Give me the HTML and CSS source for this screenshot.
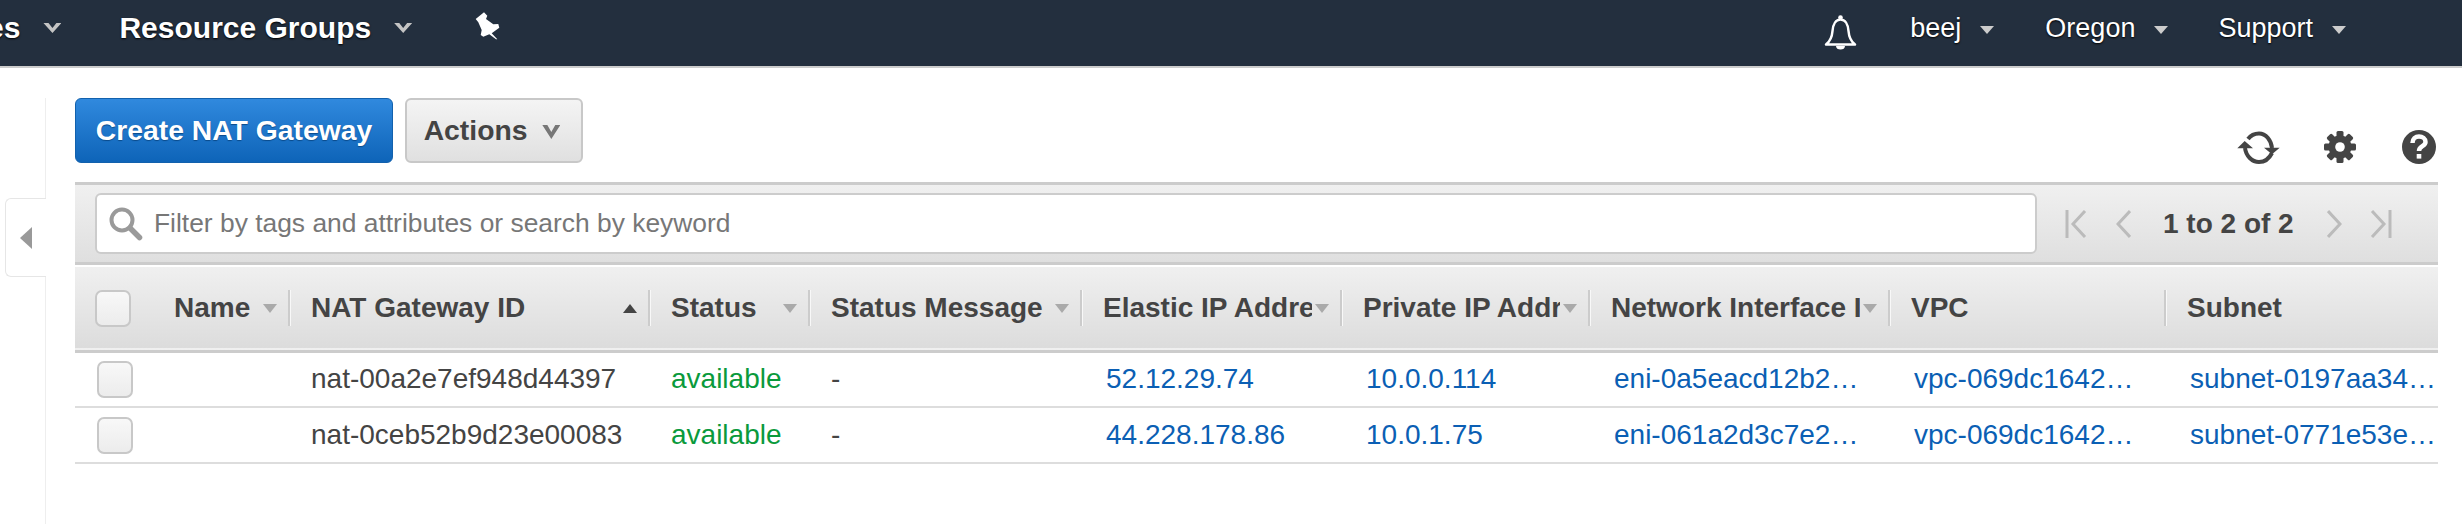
FILE: index.html
```html
<!DOCTYPE html>
<html lang="en">
<head>
    <meta charset="UTF-8">
    <title>NAT Gateways</title>
    <link rel="stylesheet" href="styles.css">
</head>
<body>
    <div class="nav">
        <div class="nav-item nav-services">Services <span class="chev"></span></div>
        <div class="nav-item nav-groups">Resource Groups <span class="chev"></span></div>
        <svg class="pin" width="26" height="30" viewBox="0 0 26 30"><path fill="#fff" d="M.7 8L9 1.300l3.300 3.400L11 8l7.300 5.300 5-.3 1 3.700-7.600 5.600 5.600 6h-1.300l-6.700-5-6 2.400-2.600-1.700 1-5-3.400-7.700z"/></svg>
        <div class="nav-right">
            <svg class="bell" width="33" height="35" viewBox="0 0 33 35"><path fill="none" stroke="#fff" stroke-width="2.500" stroke-linejoin="round" d="M2 29.500c4-3 6-7 6.500-13.500C9 9 12 4.500 16.500 4.500S24 9 24.500 16c.5 6.500 2.500 10.500 6.500 13.500z"/><circle cx="16.500" cy="2.500" r="2.300" fill="#fff"/><path fill="#fff" d="M12 31h9c0 2.500-2 3.500-4.500 3.500S12 33.500 12 31z"/></svg>
            <div class="nav-link link-user">beej <span class="caret"></span></div>
            <div class="nav-link link-region">Oregon <span class="caret"></span></div>
            <div class="nav-link link-support">Support <span class="caret"></span></div>
        </div>
    </div>

    <div class="page">
        <div class="side">
            <div class="side-tab"><span class="side-arrow"></span></div>
        </div>
        <div class="content">
            <div class="actions">
                <button class="btn btn-primary">Create NAT Gateway</button>
                <button class="btn btn-plain">Actions <span class="chev chev-dark"></span></button>
                <div class="tools">
                    <svg class="tool-refresh" width="44" height="34" viewBox="0 0 44 34"><g fill="none" stroke="#444" stroke-width="4"><path d="M11 8c3-4 7-5.500 11-5.500 7 0 12 6.500 13 14.500"/><path d="M35 22c-3 6-8 9-13 9-7 0-13-6-14-14"/></g><path fill="#444" d="M.3 17.300L7.700 10l8.300 7.300zM27 16.700h15.700L35 23.300z"/></svg>
                    <svg class="tool-gear" width="32" height="32" viewBox="0 0 32 32"><g fill="#444"><rect x="12.500" width="7" height="32" rx="1.500"/><rect y="12.500" width="32" height="7" rx="1.500"/><rect x="12.500" width="7" height="32" rx="1.500" transform="rotate(45 16 16)"/><rect x="12.500" width="7" height="32" rx="1.500" transform="rotate(135 16 16)"/><circle cx="16" cy="16" r="11.500"/></g><circle cx="16" cy="16" r="4.800" fill="#fff"/></svg>
                    <svg class="tool-help" width="34" height="34" viewBox="0 0 34 34"><circle cx="17" cy="17" r="17" fill="#444"/><path fill="none" stroke="#fff" stroke-width="4.500" d="M10.500 13c0-4 3-6.500 6.500-6.500s6.500 2.200 6.500 5.500c0 4.500-6.500 4-6.500 9"/><rect x="14.700" y="24" width="4.600" height="4.600" fill="#fff"/></svg>
                </div>
            </div>

            <div class="toolbar">
                <div class="filter">
                    <svg class="search" width="36" height="36" viewBox="0 0 36 36"><circle cx="14" cy="14" r="10.500" fill="none" stroke="#9a9a9a" stroke-width="4"/><path stroke="#9a9a9a" stroke-width="5.500" stroke-linecap="round" d="M22 22l9.500 9.500"/></svg>
                    <span>Filter by tags and attributes or search by keyword</span>
                </div>
                <div class="pager">
                    <svg width="22" height="28" viewBox="0 0 22 28"><path fill="none" stroke="#bbb" stroke-width="3" d="M2 0v28M20 1L8 14l12 13"/></svg>
                    <svg class="pager-prev" width="15" height="28" viewBox="0 0 15 28"><path fill="none" stroke="#bbb" stroke-width="3" d="M14 1L2 14l12 13"/></svg>
                    <span class="pager-text">1 to 2 of 2</span>
                    <svg class="pager-next" width="15" height="28" viewBox="0 0 15 28"><path fill="none" stroke="#bbb" stroke-width="3" d="M1 1l12 13L1 27"/></svg>
                    <svg class="pager-last" width="22" height="28" viewBox="0 0 22 28"><path fill="none" stroke="#bbb" stroke-width="3" d="M20 0v28M2 1l12 13L2 27"/></svg>
                </div>
            </div>

            <table class="grid">
                <colgroup>
                    <col class="c-check"><col class="c-name"><col class="c-id"><col class="c-status"><col class="c-msg">
                    <col class="c-eip"><col class="c-pip"><col class="c-eni"><col class="c-vpc"><col class="c-subnet">
                </colgroup>
                <thead>
                    <tr>
                        <th><div class="check check-head"></div></th>
                        <th><div class="th"><span class="th-label">Name</span><span class="sort"></span></div></th>
                        <th><div class="th"><span class="th-label">NAT Gateway ID</span><span class="sort sort-up"></span></div></th>
                        <th><div class="th"><span class="th-label">Status</span><span class="sort"></span></div></th>
                        <th><div class="th"><span class="th-label">Status Message</span><span class="sort"></span></div></th>
                        <th><div class="th"><span class="th-label">Elastic IP Address</span><span class="sort"></span></div></th>
                        <th><div class="th"><span class="th-label">Private IP Address</span><span class="sort"></span></div></th>
                        <th><div class="th"><span class="th-label">Network Interface ID</span><span class="sort"></span></div></th>
                        <th><div class="th"><span class="th-label">VPC</span></div></th>
                        <th class="th-last"><div class="th"><span class="th-label">Subnet</span></div></th>
                    </tr>
                </thead>
                <tbody>
                    <tr>
                        <td><div class="check"></div></td>
                        <td></td>
                        <td>nat-00a2e7ef948d44397</td>
                        <td class="ok">available</td>
                        <td>-</td>
                        <td><a>52.12.29.74</a></td>
                        <td><a>10.0.0.114</a></td>
                        <td><a>eni-0a5eacd12b2…</a></td>
                        <td><a>vpc-069dc1642…</a></td>
                        <td><a>subnet-0197aa34…</a></td>
                    </tr>
                    <tr>
                        <td><div class="check"></div></td>
                        <td></td>
                        <td>nat-0ceb52b9d23e00083</td>
                        <td class="ok">available</td>
                        <td>-</td>
                        <td><a>44.228.178.86</a></td>
                        <td><a>10.0.1.75</a></td>
                        <td><a>eni-061a2d3c7e2…</a></td>
                        <td><a>vpc-069dc1642…</a></td>
                        <td><a>subnet-0771e53e…</a></td>
                    </tr>
                </tbody>
            </table>
        </div>
    </div>
</body>
</html>
```

FILE: styles.css
```css
body {
    margin: 0;
    height: 524px;
    overflow: hidden;
    background-color: #ffffff;
    font-family: "Liberation Sans", Arial, sans-serif;
    color: #444444;
}
.nav {
    display: flex;
    align-items: center;
    height: 66px;
    border-bottom: 2px solid #cccccc;
    background-color: #232f3e;
    color: #ffffff;
    overflow: hidden;
    text-shadow: 0 1px 2px #000000;
}
.nav-item {
    display: flex;
    align-items: center;
    flex-shrink: 0;
    font-size: 30px;
    font-weight: bold;
    white-space: nowrap;
    padding-bottom: 10px;
}
.nav-services {
    margin-left: -103px;
}
.nav-groups {
    margin-left: 58px;
}
.chev {
    display: inline-block;
    width: 18px;
    height: 10px;
    margin-left: 23px;
    background-color: #c4c4c4;
    clip-path: polygon(0 0, 28% 0, 50% 50%, 72% 0, 100% 0, 50% 100%);
}
.chev-dark {
    height: 14px;
    margin-left: 7px;
    background-color: #777777;
    position: relative;
    top: -1px;
}
.pin {
    margin-left: 63px;
    margin-bottom: 14px;
}
.nav-right {
    display: flex;
    align-items: center;
    margin-left: auto;
    margin-right: 116px;
    padding-bottom: 10px;
}
.nav-link {
    display: flex;
    align-items: center;
    font-size: 27px;
    white-space: nowrap;
}
.link-user {
    margin-left: 53px;
}
.link-region {
    margin-left: 51px;
}
.link-support {
    margin-left: 50px;
}
.caret {
    width: 0;
    height: 0;
    margin-left: 19px;
    margin-top: 3px;
    border-left: 7px solid transparent;
    border-right: 7px solid transparent;
    border-top: 8px solid #cccccc;
}
.bell {
    margin-top: 8px;
}
.page {
    display: flex;
    padding-top: 30px;
    height: 456px;
    box-sizing: border-box;
}
.side {
    position: relative;
    flex-shrink: 0;
    width: 46px;
    border-right: 1px solid #eeeeee;
    box-sizing: border-box;
    margin-right: 29px;
}
.side-tab {
    position: absolute;
    top: 100px;
    left: 5px;
    width: 41px;
    height: 79px;
    box-sizing: border-box;
    display: flex;
    align-items: center;
    background-color: #ffffff;
    border: 1px solid #e6e6e6;
    border-right: none;
    border-radius: 6px 0 0 6px;
}
.side-arrow {
    margin-left: 14px;
    width: 0;
    height: 0;
    border-top: 11px solid transparent;
    border-bottom: 11px solid transparent;
    border-right: 12px solid #999999;
}
.content {
    width: 2363px;
}
.actions {
    display: flex;
    height: 84px;
    align-items: flex-start;
}
.btn {
    height: 65px;
    box-sizing: border-box;
    font-family: inherit;
    font-size: 28.300px;
    font-weight: bold;
    border-radius: 6px;
    padding: 0;
}
.btn-primary {
    width: 318px;
    color: #ffffff;
    background: linear-gradient(#3089de, #0e64b8);
    border: 1px solid #1261ad;
    text-shadow: 0 1px 1px #0a4a8a;
}
.btn-plain {
    width: 178px;
    margin-left: 12px;
    padding-right: 4px;
    color: #444444;
    background: linear-gradient(#f4f4f4, #e0e0e0);
    border: 2px solid #c8c8c8;
}
.tools {
    display: flex;
    align-items: center;
    margin-left: auto;
    margin-top: 33px;
    margin-right: 2px;
}
.tool-gear {
    margin-left: 43px;
    margin-top: -3px;
}
.tool-help {
    margin-left: 46px;
    margin-top: -2px;
}
.toolbar {
    display: flex;
    align-items: center;
    height: 83px;
    box-sizing: border-box;
    padding-left: 20px;
    background: linear-gradient(#f0f0f0, #dfdfdf);
    border-top: 3px solid #cccccc;
    border-bottom: 3px solid #cccccc;
}
.filter {
    display: flex;
    align-items: center;
    width: 1942px;
    height: 61px;
    box-sizing: border-box;
    padding-left: 11px;
    background-color: #ffffff;
    border: 2px solid #cccccc;
    border-radius: 6px;
    font-size: 26.400px;
    color: #777777;
}
.filter span {
    margin-left: 10px;
}
.pager {
    display: flex;
    align-items: center;
    margin-left: 28px;
}
.pager-prev {
    margin-left: 29px;
}
.pager-text {
    margin-left: 32px;
    font-size: 28px;
    font-weight: bold;
    color: #444444;
}
.pager-next {
    margin-left: 33px;
}
.pager-last {
    margin-left: 28px;
}
.grid {
    width: 2363px;
    margin-top: 2px;
    table-layout: fixed;
    border-collapse: collapse;
    font-size: 28px;
}
.c-check { width: 78px; }
.c-name { width: 137px; }
.c-id { width: 360px; }
.c-status { width: 160px; }
.c-msg { width: 272px; }
.c-eip { width: 260px; }
.c-pip { width: 248px; }
.c-eni { width: 300px; }
.c-vpc { width: 276px; }
.c-subnet { width: 272px; }
.grid thead tr {
    height: 84px;
    background: linear-gradient(#f0f0f0, #dcdcdc);
    border-bottom: 3px solid #cccccc;
}
.grid th {
    padding: 0;
    text-align: left;
    font-size: 28px;
    font-weight: bold;
}
.th {
    display: flex;
    align-items: center;
    height: 36px;
    padding-left: 21px;
    padding-right: 11px;
    border-right: 2px solid #cccccc;
    box-shadow: 1px 0 0 #f8f8f8;
}
.th-last .th {
    border-right: none;
    box-shadow: none;
}
.th-label {
    flex: 1;
    min-width: 0;
    overflow: hidden;
    white-space: nowrap;
}
.sort {
    flex-shrink: 0;
    width: 0;
    height: 0;
    margin-left: 3px;
    border-left: 7px solid transparent;
    border-right: 7px solid transparent;
    border-top: 9px solid #aaaaaa;
}
.sort-up {
    border-top: none;
    border-bottom: 9px solid #444444;
}
.check {
    width: 36px;
    height: 37px;
    box-sizing: border-box;
    margin-left: 22px;
    background: linear-gradient(#f8f8f8, #ececec);
    border: 2px solid #c8c8c8;
    border-radius: 7px;
}
.check-head {
    margin-left: 20px;
}
.grid tbody tr {
    height: 56px;
    border-bottom: 2px solid #dddddd;
}
.grid td {
    padding: 0 0 0 21px;
    white-space: nowrap;
    overflow: hidden;
}
.grid td:first-child {
    padding-left: 0;
}
.grid a {
    margin-left: 3px;
    color: #0b5fb4;
}
.ok {
    color: #0a9a3c;
}
```
